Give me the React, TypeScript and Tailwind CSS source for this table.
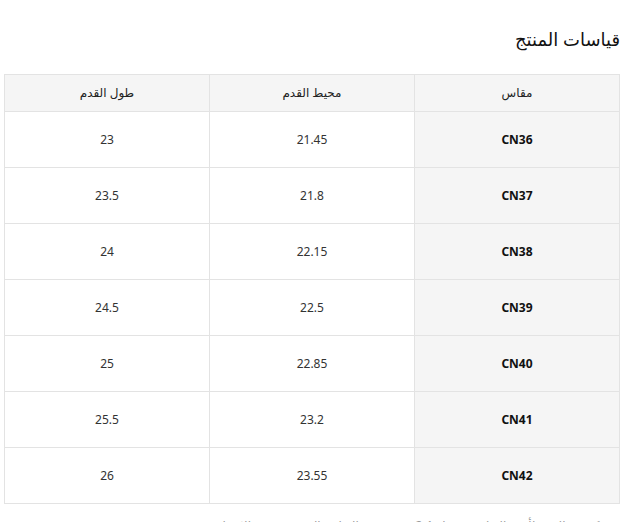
import React from 'react';

const rows = [
    { size: 'CN36', girth: '21.45', length: '23' },
    { size: 'CN37', girth: '21.8', length: '23.5' },
    { size: 'CN38', girth: '22.15', length: '24' },
    { size: 'CN39', girth: '22.5', length: '24.5' },
    { size: 'CN40', girth: '22.85', length: '25' },
    { size: 'CN41', girth: '23.2', length: '25.5' },
    { size: 'CN42', girth: '23.55', length: '26' },
];

const App: React.FC = () => {
    return (
        <div
            dir="rtl"
            className="bg-white min-h-screen pl-[4px] pr-[9px] pt-[24px]"
            style={{ fontFamily: '"Noto Sans", "DejaVu Sans", sans-serif' }}
        >
            <h2 className="text-[18px] font-medium text-[#111] leading-[30px] mb-[20px] tracking-[-0.5px]">قياسات المنتج</h2>

            <table className="w-[616px] border-collapse table-fixed text-[12px] text-[#333]">
                <thead>
                    <tr className="bg-[#f5f5f5] h-[37px]">
                        <th className="border border-[#e3e3e3] font-medium text-[#222]">مقاس</th>
                        <th className="border border-[#e3e3e3] font-medium text-[#222]">محيط القدم</th>
                        <th className="border border-[#e3e3e3] font-medium text-[#222]">طول القدم</th>
                    </tr>
                </thead>
                <tbody>
                    {rows.map(row => (
                        <tr key={row.size} className="h-[56px]">
                            <td className="border border-[#e3e3e3] bg-[#f5f5f5] text-center font-bold text-[#111]">
                                {row.size}
                            </td>
                            <td className="border border-[#e3e3e3] text-center">{row.girth}</td>
                            <td className="border border-[#e3e3e3] text-center">{row.length}</td>
                        </tr>
                    ))}
                </tbody>
            </table>

            <p className="mt-[13px] text-[12px] text-[#999] pr-[1px]">
                قد يكون هناك خطأ في القياس بمقدار 1-2 سم بسبب القياس اليدوي، يرجى الاختيار.
            </p>
        </div>
    );
};

export default App;
